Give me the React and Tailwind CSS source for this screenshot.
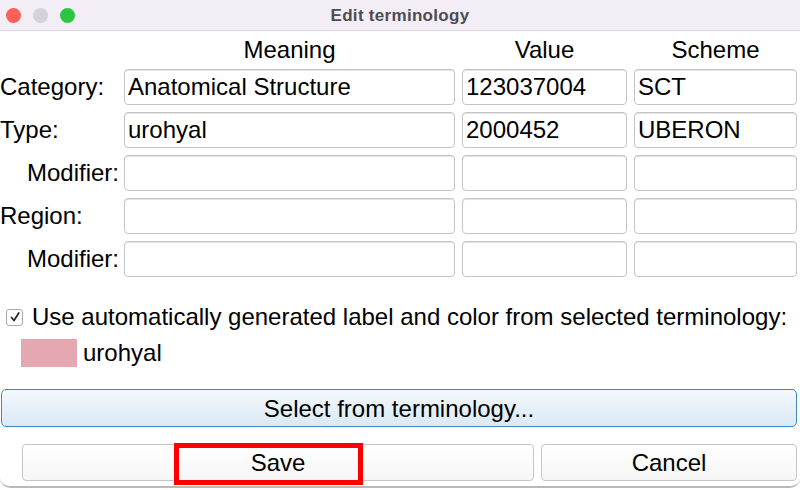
import React from 'react';

const rows = [
  { label: 'Category:', indent: false, meaning: 'Anatomical Structure', value: '123037004', scheme: 'SCT' },
  { label: 'Type:', indent: false, meaning: 'urohyal', value: '2000452', scheme: 'UBERON' },
  { label: 'Modifier:', indent: true, meaning: '', value: '', scheme: '' },
  { label: 'Region:', indent: false, meaning: '', value: '', scheme: '' },
  { label: 'Modifier:', indent: true, meaning: '', value: '', scheme: '' },
];

const Field = ({ text }) => (
  <div className="h-[36px] border border-[#c4c4c4] rounded-[4px] bg-white flex items-center pl-[3px] shadow-[inset_0_1px_0_#e4e4e4] truncate">
    {text}
  </div>
);

const App = () => {
  return (
    <div
      className="w-[800px] h-[490px] bg-white text-black overflow-hidden text-[24px] leading-none"
      style={{ fontFamily: '"Liberation Sans", Arial, sans-serif' }}
    >
      <div className="h-[488px] flex flex-col rounded-b-[10px] border-b-[2px] border-[#b9b9b9] bg-white">
        {/* Title bar */}
        <div className="h-[31px] shrink-0 bg-[#f3eef6] border-b border-[#d8d4da] flex items-center relative">
          <div className="flex gap-[12px] pl-[6px]">
            <span className="w-[15px] h-[15px] rounded-full bg-[#fe5f57]" />
            <span className="w-[15px] h-[15px] rounded-full bg-[#d6d2d8]" />
            <span className="w-[15px] h-[15px] rounded-full bg-[#2ac641]" />
          </div>
          <div className="absolute inset-0 flex items-center justify-center text-[17px] font-bold tracking-[0.3px] text-[#4e4c50]">
            Edit terminology
          </div>
        </div>

        {/* Terms grid */}
        <div className="grid grid-cols-[117px_331px_165px_163px] gap-x-[7px] gap-y-[7px] pt-[6px] pr-[3px]">
          <div />
          <div className="h-[25px] flex items-center justify-center">Meaning</div>
          <div className="h-[25px] flex items-center justify-center">Value</div>
          <div className="h-[25px] flex items-center justify-center">Scheme</div>
          {rows.map((r, i) => (
            <React.Fragment key={i}>
              <div className={`h-[36px] flex items-center ${r.indent ? 'pl-[27px]' : ''}`}>{r.label}</div>
              <Field text={r.meaning} />
              <Field text={r.value} />
              <Field text={r.scheme} />
            </React.Fragment>
          ))}
        </div>

        {/* Auto label */}
        <div className="flex items-center mt-[23px] pl-[6px] h-[34px]">
          <span className="w-[17px] h-[17px] border border-[#a9a9a9] rounded-[3px] bg-white flex items-center justify-center mr-[9px]">
            <svg width="12" height="12" viewBox="0 0 12 12">
              <path d="M2.5 6.5 L5 9.5 L9.8 2" fill="none" stroke="#222" strokeWidth="1.7" strokeLinecap="round" strokeLinejoin="round" />
            </svg>
          </span>
          <span>Use automatically generated label and color from selected terminology:</span>
        </div>
        <div className="flex items-center pl-[21px] mt-[5px]">
          <span className="w-[56px] h-[28px] bg-[#e6a8b0]" />
          <span className="ml-[6px]">urohyal</span>
        </div>

        {/* Select button */}
        <div className="pl-[1px] pr-[3px] mt-[22px]">
          <div className="h-[38px] rounded-[5px] border-[1.5px] border-[#3b8ac4] bg-gradient-to-b from-[#f3f8fc] to-[#dce9f3] flex items-center justify-center pt-[2px]">
            Select from terminology...
          </div>
        </div>

        {/* Save / Cancel */}
        <div className="flex gap-[7px] pl-[22px] pr-[3px] mt-[17px]">
          <div className="w-[512px] h-[37px] rounded-[4px] border border-[#c6c6c6] bg-gradient-to-b from-white to-[#f6f6f6] flex items-center justify-center relative pt-[1px]">
            <span>Save</span>
            <div className="absolute left-[151px] top-[-2px] w-[189px] h-[42px] border-[5px] border-[#ff0000]" />
          </div>
          <div className="flex-1 h-[37px] rounded-[4px] border border-[#c6c6c6] bg-gradient-to-b from-white to-[#f6f6f6] flex items-center justify-center pt-[1px]">
            Cancel
          </div>
        </div>
      </div>
    </div>
  );
};

export default App;
